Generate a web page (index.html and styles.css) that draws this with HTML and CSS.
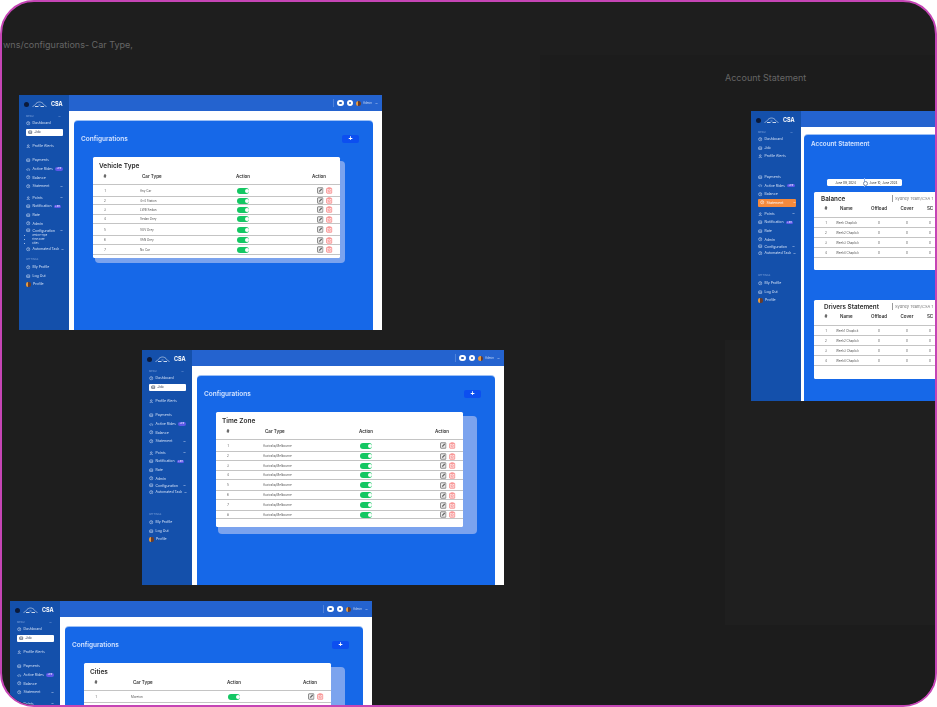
FILE: index.html

```html
<!DOCTYPE html>
<html lang="en">
<head>
  <meta charset="UTF-8" />
  <title>Dropdowns/configurations</title>
  <link rel="stylesheet" href="styles.css">
</head>
<body>
  <svg class="defs" aria-hidden="true">
    <symbol id="i-ring" viewBox="0 0 10 10"><circle cx="5" cy="5" r="3.6" fill="none" stroke="currentColor" stroke-width="1.2"/><path d="M5 3v2h2" fill="none" stroke="currentColor"/></symbol>
    <symbol id="i-box" viewBox="0 0 10 10"><rect x="1.5" y="2" width="7" height="6" rx="1" fill="none" stroke="currentColor" stroke-width="1.2"/><path d="M1.5 5h7" stroke="currentColor"/></symbol>
    <symbol id="i-user" viewBox="0 0 10 10"><circle cx="5" cy="3.4" r="1.8" fill="none" stroke="currentColor" stroke-width="1.2"/><path d="M1.5 9c.5-3 6.5-3 7 0" fill="none" stroke="currentColor" stroke-width="1.2"/></symbol>
    <symbol id="i-car" viewBox="0 0 14 10"><path d="M1 7c0-2 2-2 3-3 2-2 4-2 6 0 1 1 3 1 3 3z" fill="none" stroke="currentColor" stroke-width="1.1"/><circle cx="4" cy="8" r="1" fill="currentColor"/><circle cx="10" cy="8" r="1" fill="currentColor"/></symbol>
    <symbol id="i-chev" viewBox="0 0 6 6"><path d="M1 2l2 2 2-2" fill="none" stroke="currentColor"/></symbol>
    <symbol id="i-logo" viewBox="0 0 30 14"><path d="M1 11c3-1 4-2 7-6 4-4 10-4 14 0 3 4 4 5 7 6" fill="none" stroke="#fff"/><path d="M6 11h7m4 0h7" stroke="#fff" stroke-width="1.6"/><path d="M13 8h4" stroke="#dbe7ff"/></symbol>
    <symbol id="i-edit" viewBox="0 0 12 12"><rect x="1" y="1" width="10" height="10" rx=".8" fill="#eee" stroke="currentColor" stroke-width="1.4"/><path d="M3.5 8.5l.4-2L8 2.5 9.5 4l-4 4.100z" fill="currentColor"/></symbol>
    <symbol id="i-trash" viewBox="0 0 12 12"><rect x="1.2" y="2" width="9.6" height="9" rx="1" fill="#fde3e3" stroke="currentColor" stroke-width="1.3"/><path d="M4 2V.8h4V2" fill="none" stroke="currentColor"/><circle cx="6" cy="6.5" r="2" fill="none" stroke="currentColor"/></symbol>
  </svg>

  <div class="canvas">
    <div class="zone"></div>
    <div class="zone-account"></div>
    <p class="frame-label label-left">wns/configurations- Car Type,</p>
    <p class="frame-label label-right">Account Statement</p>

    <!-- vehicle type -->
    <section class="shot shot-one">
      <aside class="side">
        <div class="brand"><span class="brand-dot"></span><svg class="brand-car"><use href="#i-logo"/></svg><b>CSA</b></div>
        <div class="side-main">
          <div class="side-title">MENU<svg class="chev"><use href="#i-chev"/></svg></div>
          <a class="item"><svg class="ic"><use href="#i-ring"/></svg>Dashboard</a>
          <a class="item active"><svg class="ic"><use href="#i-box"/></svg>Job</a>
          <a class="item group"><svg class="ic"><use href="#i-user"/></svg>Profile Alerts</a>
          <a class="item group"><svg class="ic"><use href="#i-box"/></svg>Payments</a>
          <a class="item"><svg class="ic"><use href="#i-car"/></svg>Active Rides<span class="badge">+99</span></a>
          <a class="item"><svg class="ic"><use href="#i-ring"/></svg>Balance</a>
          <a class="item"><svg class="ic"><use href="#i-ring"/></svg>Statement<svg class="chev"><use href="#i-chev"/></svg></a>
          <a class="item group-sm"><svg class="ic"><use href="#i-user"/></svg>Points<svg class="chev"><use href="#i-chev"/></svg></a>
          <a class="item"><svg class="ic"><use href="#i-box"/></svg>Notification<span class="badge">+99</span></a>
          <a class="item"><svg class="ic"><use href="#i-box"/></svg>Rate</a>
          <a class="item"><svg class="ic"><use href="#i-ring"/></svg>Admin</a>
          <a class="item tight"><svg class="ic"><use href="#i-box"/></svg>Configuration<svg class="chev"><use href="#i-chev"/></svg></a>
          <ul class="subnav"><li>Vehicle Type</li><li>Time Zone</li><li>Cities</li></ul>
          <a class="item tight"><svg class="ic"><use href="#i-ring"/></svg>Automated Task<svg class="chev"><use href="#i-chev"/></svg></a>
        </div>
        <div class="side-title">SETTINGS</div>
        <a class="item"><svg class="ic"><use href="#i-ring"/></svg>My Profile</a>
        <a class="item"><svg class="ic"><use href="#i-box"/></svg>Log Out</a>
        <a class="item"><span class="mini-avatar"></span>Profile</a>
      </aside>
      <div class="content">
        <header class="topbar"><span class="top-sep"></span><span class="top-btn"></span><span class="top-btn"></span><span class="mini-avatar"></span><span class="top-name">Admin</span><svg class="chev"><use href="#i-chev"/></svg></header>
        <div class="main">
          <div class="panel">
            <div class="panel-head"><h2>Configurations</h2><button class="add">+</button></div>
            <div class="card card-config back-sm">
              <h3>Vehicle Type</h3>
              <div class="row head"><span>#</span><span>Car Type</span><span>Action</span><span>Action</span></div>
              <div class="row h12"><span>1</span><span>Any Car</span><i class="toggle"></i><span class="acts"><svg class="edit"><use href="#i-edit"/></svg><svg class="trash"><use href="#i-trash"/></svg></span></div>
              <div class="row h8"><span>2</span><span>4x4 Station</span><i class="toggle"></i><span class="acts"><svg class="edit"><use href="#i-edit"/></svg><svg class="trash"><use href="#i-trash"/></svg></span></div>
              <div class="row"><span>3</span><span>LWB Sedan</span><i class="toggle"></i><span class="acts"><svg class="edit"><use href="#i-edit"/></svg><svg class="trash"><use href="#i-trash"/></svg></span></div>
              <div class="row h9"><span>4</span><span>Sedan Grey</span><i class="toggle"></i><span class="acts"><svg class="edit"><use href="#i-edit"/></svg><svg class="trash"><use href="#i-trash"/></svg></span></div>
              <div class="row h12"><span>5</span><span>SUV Grey</span><i class="toggle"></i><span class="acts"><svg class="edit"><use href="#i-edit"/></svg><svg class="trash"><use href="#i-trash"/></svg></span></div>
              <div class="row h9"><span>6</span><span>VAN Grey</span><i class="toggle"></i><span class="acts"><svg class="edit"><use href="#i-edit"/></svg><svg class="trash"><use href="#i-trash"/></svg></span></div>
              <div class="row"><span>7</span><span>No Car</span><i class="toggle"></i><span class="acts"><svg class="edit"><use href="#i-edit"/></svg><svg class="trash"><use href="#i-trash"/></svg></span></div>
            </div>
          </div>
        </div>
      </div>
    </section>

    <!-- time zone -->
    <section class="shot shot-two">
      <aside class="side">
        <div class="brand"><span class="brand-dot"></span><svg class="brand-car"><use href="#i-logo"/></svg><b>CSA</b></div>
        <div class="side-main">
          <div class="side-title">MENU<svg class="chev"><use href="#i-chev"/></svg></div>
          <a class="item"><svg class="ic"><use href="#i-ring"/></svg>Dashboard</a>
          <a class="item active"><svg class="ic"><use href="#i-box"/></svg>Job</a>
          <a class="item group"><svg class="ic"><use href="#i-user"/></svg>Profile Alerts</a>
          <a class="item group"><svg class="ic"><use href="#i-box"/></svg>Payments</a>
          <a class="item"><svg class="ic"><use href="#i-car"/></svg>Active Rides<span class="badge">+99</span></a>
          <a class="item"><svg class="ic"><use href="#i-ring"/></svg>Balance</a>
          <a class="item"><svg class="ic"><use href="#i-ring"/></svg>Statement<svg class="chev"><use href="#i-chev"/></svg></a>
          <a class="item group-sm"><svg class="ic"><use href="#i-user"/></svg>Points<svg class="chev"><use href="#i-chev"/></svg></a>
          <a class="item"><svg class="ic"><use href="#i-box"/></svg>Notification<span class="badge">+99</span></a>
          <a class="item"><svg class="ic"><use href="#i-box"/></svg>Rate</a>
          <a class="item"><svg class="ic"><use href="#i-ring"/></svg>Admin</a>
          <a class="item tight"><svg class="ic"><use href="#i-box"/></svg>Configuration<svg class="chev"><use href="#i-chev"/></svg></a>
          <a class="item tight"><svg class="ic"><use href="#i-ring"/></svg>Automated Task<svg class="chev"><use href="#i-chev"/></svg></a>
        </div>
        <div class="side-title">SETTINGS</div>
        <a class="item"><svg class="ic"><use href="#i-ring"/></svg>My Profile</a>
        <a class="item"><svg class="ic"><use href="#i-box"/></svg>Log Out</a>
        <a class="item"><span class="mini-avatar"></span>Profile</a>
      </aside>
      <div class="content">
        <header class="topbar"><span class="top-sep"></span><span class="top-btn"></span><span class="top-btn"></span><span class="mini-avatar"></span><span class="top-name">Admin</span><svg class="chev"><use href="#i-chev"/></svg></header>
        <div class="main">
          <div class="panel">
            <div class="panel-head"><h2>Configurations</h2><button class="add">+</button></div>
            <div class="card card-config light">
              <h3>Time Zone</h3>
              <div class="row head"><span>#</span><span>Car Type</span><span>Action</span><span>Action</span></div>
              <div class="row h12"><span>1</span><span>Australia/Melbourne</span><i class="toggle"></i><span class="acts"><svg class="edit"><use href="#i-edit"/></svg><svg class="trash"><use href="#i-trash"/></svg></span></div>
              <div class="row h9"><span>2</span><span>Australia/Melbourne</span><i class="toggle"></i><span class="acts"><svg class="edit"><use href="#i-edit"/></svg><svg class="trash"><use href="#i-trash"/></svg></span></div>
              <div class="row"><span>3</span><span>Australia/Melbourne</span><i class="toggle"></i><span class="acts"><svg class="edit"><use href="#i-edit"/></svg><svg class="trash"><use href="#i-trash"/></svg></span></div>
              <div class="row h9"><span>4</span><span>Australia/Melbourne</span><i class="toggle"></i><span class="acts"><svg class="edit"><use href="#i-edit"/></svg><svg class="trash"><use href="#i-trash"/></svg></span></div>
              <div class="row h11"><span>5</span><span>Australia/Melbourne</span><i class="toggle"></i><span class="acts"><svg class="edit"><use href="#i-edit"/></svg><svg class="trash"><use href="#i-trash"/></svg></span></div>
              <div class="row h9"><span>6</span><span>Australia/Melbourne</span><i class="toggle"></i><span class="acts"><svg class="edit"><use href="#i-edit"/></svg><svg class="trash"><use href="#i-trash"/></svg></span></div>
              <div class="row h11"><span>7</span><span>Australia/Melbourne</span><i class="toggle"></i><span class="acts"><svg class="edit"><use href="#i-edit"/></svg><svg class="trash"><use href="#i-trash"/></svg></span></div>
              <div class="row h8"><span>8</span><span>Australia/Melbourne</span><i class="toggle"></i><span class="acts"><svg class="edit"><use href="#i-edit"/></svg><svg class="trash"><use href="#i-trash"/></svg></span></div>
            </div>
          </div>
        </div>
      </div>
    </section>

    <!-- cities -->
    <section class="shot shot-three">
      <aside class="side">
        <div class="brand"><span class="brand-dot"></span><svg class="brand-car"><use href="#i-logo"/></svg><b>CSA</b></div>
        <div class="side-main">
          <div class="side-title">MENU<svg class="chev"><use href="#i-chev"/></svg></div>
          <a class="item"><svg class="ic"><use href="#i-ring"/></svg>Dashboard</a>
          <a class="item active"><svg class="ic"><use href="#i-box"/></svg>Job</a>
          <a class="item group"><svg class="ic"><use href="#i-user"/></svg>Profile Alerts</a>
          <a class="item group"><svg class="ic"><use href="#i-box"/></svg>Payments</a>
          <a class="item"><svg class="ic"><use href="#i-car"/></svg>Active Rides<span class="badge">+99</span></a>
          <a class="item"><svg class="ic"><use href="#i-ring"/></svg>Balance</a>
          <a class="item"><svg class="ic"><use href="#i-ring"/></svg>Statement<svg class="chev"><use href="#i-chev"/></svg></a>
          <a class="item group-sm"><svg class="ic"><use href="#i-user"/></svg>Points<svg class="chev"><use href="#i-chev"/></svg></a>
        </div>
      </aside>
      <div class="content">
        <header class="topbar"><span class="top-sep"></span><span class="top-btn"></span><span class="top-btn"></span><span class="mini-avatar"></span><span class="top-name">Admin</span><svg class="chev"><use href="#i-chev"/></svg></header>
        <div class="main">
          <div class="panel">
            <div class="panel-head"><h2>Configurations</h2><button class="add">+</button></div>
            <div class="card card-config">
              <h3>Cities</h3>
              <div class="row head"><span>#</span><span>Car Type</span><span>Action</span><span>Action</span></div>
              <div class="row h12"><span>1</span><span>Moreton</span><i class="toggle"></i><span class="acts"><svg class="edit"><use href="#i-edit"/></svg><svg class="trash"><use href="#i-trash"/></svg></span></div>
              <div class="row h12"><i class="toggle toggle-third"></i></div>
            </div>
          </div>
        </div>
      </div>
    </section>

    <!-- account statement -->
    <section class="shot shot-four">
      <aside class="side">
        <div class="brand"><span class="brand-dot"></span><svg class="brand-car"><use href="#i-logo"/></svg><b>CSA</b></div>
        <div class="side-main">
          <div class="side-title">MENU<svg class="chev"><use href="#i-chev"/></svg></div>
          <a class="item"><svg class="ic"><use href="#i-ring"/></svg>Dashboard</a>
          <a class="item"><svg class="ic"><use href="#i-box"/></svg>Job</a>
          <a class="item"><svg class="ic"><use href="#i-user"/></svg>Profile Alerts</a>
          <a class="item group-lg"><svg class="ic"><use href="#i-box"/></svg>Payments</a>
          <a class="item"><svg class="ic"><use href="#i-car"/></svg>Active Rides<span class="badge">+99</span></a>
          <a class="item"><svg class="ic"><use href="#i-ring"/></svg>Balance</a>
          <a class="item current"><svg class="ic"><use href="#i-ring"/></svg>Statement<svg class="chev"><use href="#i-chev"/></svg></a>
          <a class="item group-sm"><svg class="ic"><use href="#i-user"/></svg>Points<svg class="chev"><use href="#i-chev"/></svg></a>
          <a class="item"><svg class="ic"><use href="#i-box"/></svg>Notification<span class="badge">+99</span></a>
          <a class="item"><svg class="ic"><use href="#i-box"/></svg>Rate</a>
          <a class="item"><svg class="ic"><use href="#i-ring"/></svg>Admin</a>
          <a class="item tight"><svg class="ic"><use href="#i-box"/></svg>Configuration<svg class="chev"><use href="#i-chev"/></svg></a>
          <a class="item tight"><svg class="ic"><use href="#i-ring"/></svg>Automated Task<svg class="chev"><use href="#i-chev"/></svg></a>
        </div>
        <div class="side-title">SETTINGS</div>
        <a class="item"><svg class="ic"><use href="#i-ring"/></svg>My Profile</a>
        <a class="item"><svg class="ic"><use href="#i-box"/></svg>Log Out</a>
        <a class="item"><span class="mini-avatar"></span>Profile</a>
      </aside>
      <div class="content">
        <header class="topbar"></header>
        <div class="main">
          <div class="panel">
            <h2 class="panel-title">Account Statement</h2>
            <div class="dates"><span>June 09, 2024</span><i></i><span>June 10, June 2024</span></div>
            <div class="card card-state card-balance">
              <div class="state-title"><h3>Balance</h3><span>Sydney Team/CSA 1</span></div>
              <div class="srow head"><span>#</span><span>Name</span><span>Offload</span><span>Cover</span><span>SC</span></div>
              <div class="srow h12"><span>1</span><span>Week Chaplick</span><span>0</span><span>0</span><span>0</span></div>
              <div class="srow"><span>2</span><span>Week2 Chaplick</span><span>0</span><span>0</span><span>0</span></div>
              <div class="srow"><span>3</span><span>Week3 Chaplick</span><span>0</span><span>0</span><span>0</span></div>
              <div class="srow h8"><span>4</span><span>Week4 Chaplick</span><span>0</span><span>0</span><span>0</span></div>
            </div>
            <div class="card card-state card-drivers">
              <div class="state-title"><h3>Drivers Statement</h3><span>Sydney Team/CSA 1</span></div>
              <div class="srow head"><span>#</span><span>Name</span><span>Offload</span><span>Cover</span><span>SC</span></div>
              <div class="srow h12"><span>1</span><span>Week1 Chaplick</span><span>0</span><span>0</span><span>0</span></div>
              <div class="srow h9"><span>2</span><span>Week2 Chaplick</span><span>0</span><span>0</span><span>0</span></div>
              <div class="srow h11"><span>3</span><span>Week3 Chaplick</span><span>0</span><span>0</span><span>0</span></div>
              <div class="srow h9"><span>4</span><span>Week4 Chaplick</span><span>0</span><span>0</span><span>0</span></div>
            </div>
          </div>
        </div>
      </div>
    </section>
  </div>
</body>
</html>
```

FILE: styles.css

```css
* {
  box-sizing: border-box;
}
html, body {
  margin: 0;
  width: 937px;
  height: 707px;
  background: #fff;
  overflow: hidden;
  font-family: Inter, 'Liberation Sans', sans-serif;
}
.defs {
  position: absolute;
  width: 0;
  height: 0;
}
.canvas {
  position: relative;
  width: 937px;
  height: 707px;
  background: #1e1e1e;
  border: 2px solid #c545b5;
  border-radius: 34px;
  overflow: hidden;
}
.zone {
  position: absolute;
  left: 538px;
  top: 53px;
  right: 0;
  bottom: 0;
  background: #1c1c1c;
}
.zone-account {
  position: absolute;
  left: 723px;
  top: 338px;
  right: 0;
  bottom: 80px;
  background: #1f1f1f;
}
.frame-label {
  position: absolute;
  margin: 0;
  font-size: 9px;
  color: #666;
  white-space: nowrap;
}
.label-left {
  left: 1px;
  top: 37px;
}
.label-right {
  left: 723px;
  top: 70px;
}

/* the pasted screens sit on the free canvas */
.shot {
  position: absolute;
  display: flex;
  width: 362px;
  height: 235px;
  filter: blur(.4px);
}
.shot-one {
  left: 17px;
  top: 93px;
  width: 363px;
}
.shot-two {
  left: 140px;
  top: 348px;
}
.shot-three {
  left: 8px;
  top: 599px;
}
.shot-four {
  left: 749px;
  top: 109px;
  width: 420px;
  height: 290px;
}

/* sidebar */
.side {
  flex: 0 0 50px;
  min-width: 0;
  overflow: hidden;
  background: #1450ab;
  padding: 0 0 0 5px;
  color: #d5e2f8;
}
.brand {
  display: flex;
  align-items: center;
  height: 18px;
  font-size: 5.5px;
  color: #fff;
}
.brand-dot {
  width: 5px;
  height: 5px;
  border-radius: 50%;
  background: #0b1a3a;
  margin-right: 3px;
}
.brand-car {
  width: 15px;
  height: 7px;
  margin-right: 4px;
}
.side-main {
  height: 143px;
}
.side-title {
  display: flex;
  justify-content: space-between;
  align-items: center;
  height: 6px;
  padding: 0 8px 0 2px;
  font-size: 2.5px;
  color: #7fa3dc;
}
.side-main + .side-title {
  height: 7px;
}
.item {
  display: flex;
  align-items: center;
  gap: 2px;
  height: 8.6px;
  margin-right: 6px;
  padding-left: 2px;
  font-size: 3.5px;
  white-space: nowrap;
}
.ic {
  flex: none;
  width: 4.5px;
  height: 4.5px;
}
.item .chev {
  margin-left: auto;
}
.chev {
  flex: none;
  width: 3px;
  height: 3px;
}
.active {
  height: 7px;
  margin: 1px 6px 1px 2px;
  background: #fff;
  color: #1c2a45;
  border-radius: 1px;
}
.current {
  height: 8px;
  margin: 0 5px 0 2px;
  background: #f58a3c;
  border-radius: 1px;
  color: #fff;
}
.group {
  margin-top: 6px;
}
.group-lg {
  margin-top: 12px;
}
.group-sm {
  margin-top: 3px;
}
.tight {
  height: 7.4px;
}
.item + .tight {
  margin-top: -1px;
}
.badge {
  margin-left: auto;
  margin-right: 2px;
  padding: 0 1.5px;
  height: 3.5px;
  line-height: 3.5px;
  border-radius: 2px;
  background: #5d57e8;
  color: #fff;
  font-size: 2.5px;
}
.subnav {
  margin: 0;
  padding: 0 0 0 8px;
  font-size: 2.5px;
  line-height: 3.8px;
}
.mini-avatar {
  flex: none;
  width: 5px;
  height: 5px;
  border-radius: 2px;
  background: linear-gradient(90deg, #e89a3c 50%, #6a3d2b 50%);
}

/* top bar and body */
.content {
  flex: 1;
  display: flex;
  flex-direction: column;
  min-width: 0;
}
.topbar {
  flex: 0 0 16px;
  display: flex;
  align-items: center;
  justify-content: flex-end;
  gap: 3px;
  padding-right: 4px;
  background: #2463cf;
  color: #c8d8f5;
}
.top-sep {
  width: 1px;
  height: 8px;
  background: #4f82da;
}
.top-btn {
  flex: none;
  width: 6.5px;
  height: 6.5px;
  border-radius: 50%;
  border: 2px solid #fff;
  background: #2e62b8;
}
.topbar .mini-avatar {
  border-radius: 50%;
}
.top-name {
  font-size: 3px;
  margin-left: -1.5px;
}
.main {
  flex: 1;
  min-height: 0;
  padding: 10px 9px 0 5px;
  background: #fff;
}
.panel {
  height: 100%;
  background: #1668e8;
  border-radius: 4px 4px 0 0;
  box-shadow: 0 -1px 0 #9dc0f5;
  isolation: isolate;
}
.panel-head {
  display: flex;
  justify-content: space-between;
  align-items: center;
  height: 36px;
  padding: 0 14px 0 7px;
}
h2 {
  margin: 0;
  font-size: 6.5px;
  font-weight: 600;
  color: #d3e3ff;
}
.add {
  width: 17px;
  height: 8px;
  padding: 0;
  border: none;
  border-radius: 2px;
  background: #0c4ff0;
  color: #fff;
  font-size: 7px;
  font-weight: 700;
  line-height: 8px;
}

/* config tables */
.card {
  position: relative;
  background: #fff;
  color: #2a2a2a;
  border-radius: 1.5px;
}
h3 {
  margin: 0;
  font-size: 6.5px;
  font-weight: 600;
  color: #2c2c2c;
}
.card-config {
  width: 247px;
  margin-left: 19px;
  padding-bottom: 3px;
}
.card-config::before {
  content: "";
  position: absolute;
  z-index: -1;
  inset: 4px -14px -7px 2px;
  background: #7ba3ee;
  border-radius: 4px;
}
.card-config.back-sm::before {
  inset: 4px -5px -5px 2px;
}
.light {
  padding-bottom: 8px;
}
.card-config h3 {
  padding: 5px 0 0 6px;
  height: 13px;
  line-height: 9px;
}
.row {
  display: grid;
  grid-template-columns: 47px 96px 76px 1fr;
  align-items: center;
  height: 10px;
  border-bottom: 1.5px solid #c4c4c4;
  font-size: 3px;
  color: #555;
}
.row > span:first-child {
  padding-right: 23px;
  text-align: center;
}
.row.head {
  height: 15px;
  padding-bottom: 2px;
  font-size: 4.5px;
  font-weight: 600;
  color: #333;
}
.row.head span:nth-child(2) {
  padding-left: 2px;
}
.h8 { height: 8px; }
.h9 { height: 9px; }
.h11 { height: 11px; }
.h12 { height: 12px; }
.toggle {
  position: relative;
  width: 12px;
  height: 6px;
  margin-left: 1px;
  border-radius: 3px;
  background: #14c763;
}
.toggle-third {
  grid-column: 3;
}
.toggle::after {
  content: "";
  position: absolute;
  right: .5px;
  top: 1px;
  width: 4px;
  height: 4px;
  border-radius: 50%;
  background: #fff;
}
.acts {
  display: flex;
  gap: 2.5px;
  padding-left: 5px;
}
.edit, .trash {
  width: 6.5px;
  height: 7px;
}
.edit {
  color: #666;
}
.trash {
  color: #f66e6e;
}

/* account statement */
.shot-four .main {
  padding: 8px 0 0 3px;
}
.panel-title {
  padding: 5px 0 0 7px;
  height: 44px;
  font-size: 6.3px;
  line-height: 9px;
}
.dates {
  display: flex;
  align-items: center;
  width: 75px;
  height: 7px;
  margin: 0 0 6px 23px;
  background: #fff;
  border-radius: 1.5px;
  font-size: 3px;
  color: #333;
}
.dates span {
  flex: 1;
  text-align: center;
  white-space: nowrap;
}
.dates i {
  position: relative;
  width: 1px;
  height: 9px;
  background: #8fb2ef;
}
.dates i::after {
  content: "";
  position: absolute;
  left: -1px;
  top: 3px;
  width: 3px;
  height: 3px;
  border-radius: 50%;
  background: #fff;
  border: .5px solid #7f8ea8;
}
.card-state {
  width: 300px;
  margin-left: 10px;
}
.card-balance {
  height: 78px;
  margin-bottom: 30px;
}
.card-drivers {
  height: 79px;
}
.state-title {
  display: flex;
  align-items: center;
  height: 12px;
  padding: 1px 0 0 7px;
  font-size: 4px;
  color: #777;
}
.state-title h3 {
  flex: 0 0 71px;
  font-size: 6.3px;
}
.card-drivers .state-title {
  padding-left: 10px;
}
.card-drivers .state-title h3 {
  flex-basis: 68px;
}
.state-title span {
  border-left: 1px solid #999;
  padding-left: 2px;
  line-height: 7px;
}
.srow {
  display: grid;
  grid-template-columns: 24px 30px 22px 34px 12px;
  align-items: center;
  height: 10px;
  border-bottom: 1.5px solid #c4c4c4;
  font-size: 3px;
  color: #555;
  text-align: center;
}
.srow span {
  white-space: nowrap;
}
.srow span:nth-child(2) {
  text-align: left;
  margin-left: -2px;
}
.srow.head {
  height: 14px;
  padding-bottom: 5px;
  font-size: 4.5px;
  font-weight: 600;
  color: #333;
}
.srow.head span:nth-child(2) {
  margin-left: 2px;
}
```
